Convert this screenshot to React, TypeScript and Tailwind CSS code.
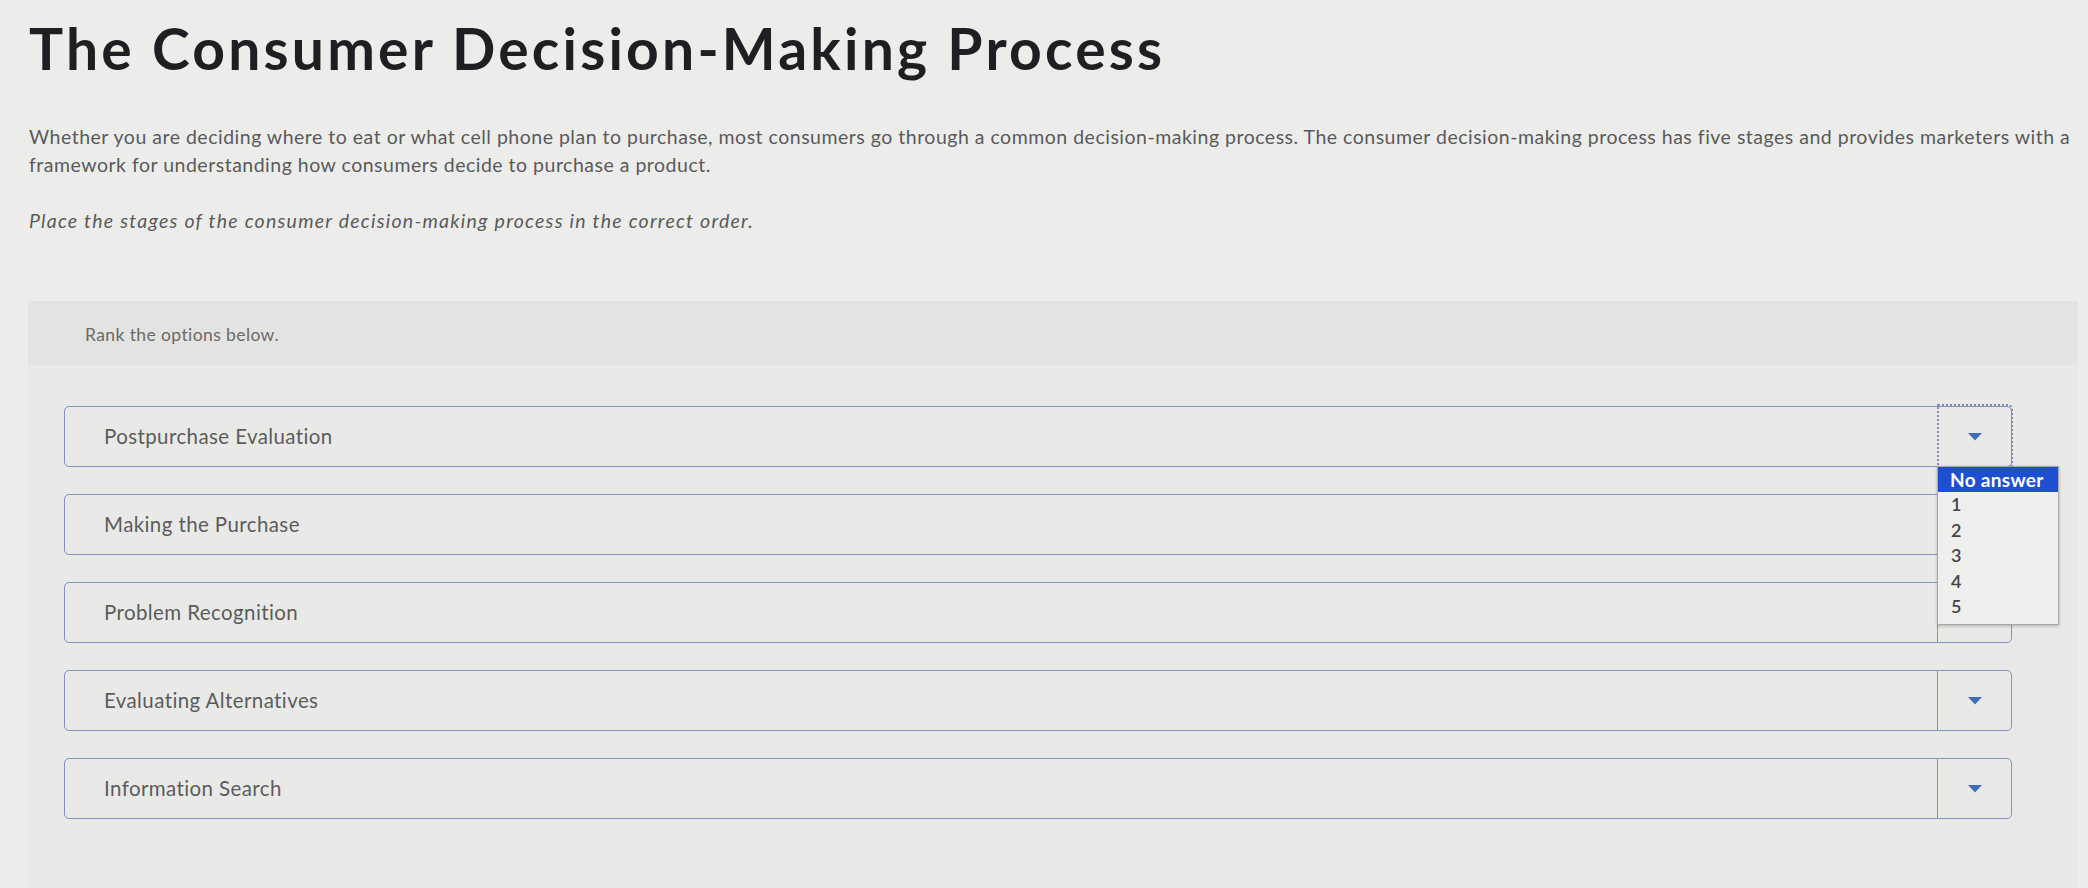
import React from "react";

const stages = [
  "Postpurchase Evaluation",
  "Making the Purchase",
  "Problem Recognition",
  "Evaluating Alternatives",
  "Information Search",
];

function Caret() {
  return (
    <svg width="14" height="8" viewBox="0 0 14 8" className="block">
      <polygon points="0,0 14,0 7,7.5" fill="#3f6db4" />
    </svg>
  );
}

function RankRow({ label, open }: { label: string; open?: boolean }) {
  return (
    <div className="relative flex h-[61px] rounded-[5px] border-[1.5px] border-[#8492c2]">
      <div className="flex flex-1 items-center pl-[39px] text-[20.5px] tracking-[0.4px] text-[#5c5c5c]">
        {label}
      </div>
      <div
        className={
          open
            ? "flex w-[76px] items-center justify-center rounded-r-[5px] border-2 border-dotted border-[#7d8cb8] -my-[3px] -mr-[2px]"
            : "flex w-[74px] items-center justify-center border-l-[1.5px] border-[#8492c2]"
        }
      >
        <Caret />
      </div>
      {open && (
        <div className="absolute right-[-48px] top-full z-10 w-[122px] border border-[#a9a9a9] bg-[#efefed] shadow-[0_1px_3px_rgba(0,0,0,0.25)]">
          <div className="h-[25px] bg-[#1f4fd1] pl-[12px] text-[19px] font-bold leading-[25px] tracking-[0.3px] text-white">
            No answer
          </div>
          <div className="pb-[4px] pl-[13px] text-[18px] font-semibold leading-[25.5px] text-[#444]">
            {[1, 2, 3, 4, 5].map((n) => (
              <div key={n}>{n}</div>
            ))}
          </div>
        </div>
      )}
    </div>
  );
}

export default function App() {
  return (
    <div className="h-[888px] w-[2088px] overflow-hidden bg-[#ecedeb] font-['Lato','Open_Sans',sans-serif]">
      <h1 className="ml-[29px] mt-[15px] text-[57px] font-bold leading-[66px] tracking-[3.2px] text-[#1f1f23]">
        The Consumer Decision-Making Process
      </h1>
      <p className="ml-[29px] mt-[42px] whitespace-nowrap text-[19.5px] leading-[28px] tracking-[0.5px] text-[#5a5a5a]">
        Whether you are deciding where to eat or what cell phone plan to purchase, most consumers go through a common
        decision-making process. The consumer decision-making process has five stages and provides marketers with a
        <br />
        framework for understanding how consumers decide to purchase a product.
      </p>
      <p className="ml-[29px] mt-[28px] text-[19.5px] italic leading-[28px] tracking-[1.25px] text-[#5a5a5a]">
        Place the stages of the consumer decision-making process in the correct order.
      </p>

      <div className="ml-[28px] mr-[10px] mt-[66px] h-[600px] bg-[#e9eae7]">
        <div className="h-[64px] bg-[#e3e4e1] pl-[57px] pt-[24px] text-[17.5px] leading-[20px] tracking-[0.4px] text-[#6a6a6a]">
          Rank the options below.
        </div>
        <div className="mr-[66px] ml-[36px] mt-[41px] flex flex-col gap-[27px]">
          {stages.map((s, i) => (
            <RankRow key={s} label={s} open={i === 0} />
          ))}
        </div>
      </div>
    </div>
  );
}
